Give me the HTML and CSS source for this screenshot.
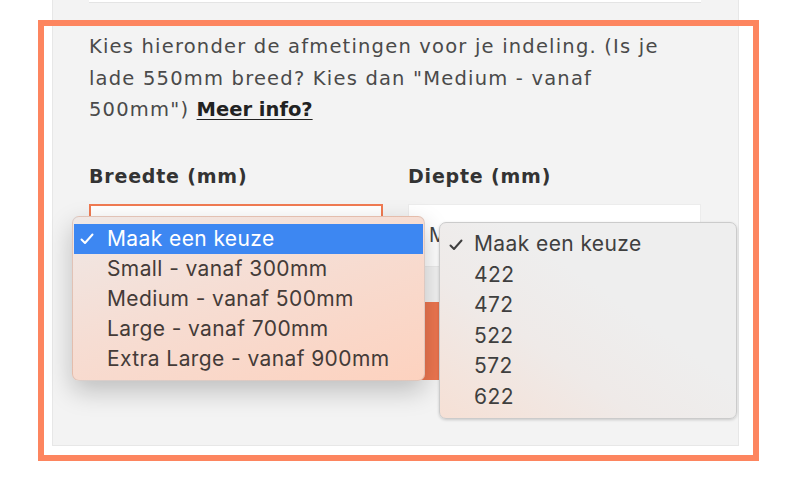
FILE: index.html
```html
<!DOCTYPE html>
<html lang="nl">
  <head>
    <meta charset="UTF-8" />
    <meta name="viewport" content="width=device-width, initial-scale=1.0" />
    <title>Afmetingen</title>
    <link rel="stylesheet" href="styles.css">
  </head>

  <body>
    <div class="page">
      <div class="panel">
        <div class="prev-field"></div>

        <p class="intro">
          Kies hieronder de afmetingen voor je indeling. (Is je
          lade 550mm breed? Kies dan "Medium - vanaf
          500mm") <a href="#" class="more">Meer info?</a>
        </p>

        <div class="fields">
          <div class="field">
            <div class="label">Breedte (mm)</div>
            <div class="select select-focus">Maak een keuze</div>
          </div>
          <div class="field">
            <div class="label">Diepte (mm)</div>
            <div class="select">Maak een keuze</div>
          </div>
        </div>

        <div class="submit"></div>
      </div>

      <!-- open dropdown lijsten -->
      <ul class="menu menu-width">
        <li class="active">
          <svg class="check" width="14" height="12" viewBox="0 0 14 12"><path d="M1.5 6.5 L5 10 L12.5 1.5" /></svg>
          Maak een keuze
        </li>
        <li>Small - vanaf 300mm</li>
        <li>Medium - vanaf 500mm</li>
        <li>Large - vanaf 700mm</li>
        <li>Extra Large - vanaf 900mm</li>
      </ul>

      <ul class="menu menu-depth">
        <li>
          <svg class="check" width="14" height="12" viewBox="0 0 14 12"><path d="M1.5 6.5 L5 10 L12.5 1.5" /></svg>
          Maak een keuze
        </li>
        <li>422</li>
        <li>472</li>
        <li>522</li>
        <li>572</li>
        <li>622</li>
      </ul>

      <div class="highlight"></div>
    </div>
  </body>
</html>
```

FILE: styles.css
```css
body {
  margin: 0;
  background-color: #ffffff;
  font-family: "Open Sans", Arial, sans-serif;
}

.page {
  position: relative;
  width: 800px;
  height: 500px;
  overflow: hidden;
}

.panel {
  box-sizing: border-box;
  width: 687px;
  height: 446px;
  margin-left: 52px;
  padding-left: 36px;
  background-color: #f3f3f3;
  border: 1px solid #e7e7e7;
  border-top: none;
}

.prev-field {
  width: 612px;
  height: 2px;
  background-color: #ffffff;
  border-bottom: 1px solid #e4e4e4;
}

.intro {
  width: 582px;
  margin: 28px 0 0;
  font-family: "DejaVu Sans", sans-serif;
  font-size: 19.5px;
  line-height: 31.5px;
  letter-spacing: 1.2px;
  color: #4a4a4a;
}

.more {
  font-weight: 700;
  color: #222222;
  text-decoration: underline;
  text-underline-offset: 3px;
  letter-spacing: 0;
}

.fields {
  display: grid;
  grid-template-columns: 294px 293px;
  gap: 25px;
  margin-top: 38px;
}

.label {
  font-family: "DejaVu Sans", sans-serif;
  font-weight: 700;
  font-size: 19px;
  line-height: 24px;
  letter-spacing: 0.8px;
  color: #333333;
  margin-bottom: 16px;
}

.select {
  box-sizing: border-box;
  height: 63px;
  padding: 0 20px;
  display: flex;
  align-items: center;
  background-color: #ffffff;
  border: 1px solid #ececec;
  font-family: Inter, Arial, sans-serif;
  font-size: 20px;
  color: #444444;
}

.select-focus {
  border: 2px solid #f07a52;
}

.submit {
  width: 612px;
  height: 78px;
  margin-top: 35px;
  background-color: #ee7650;
}

.menu {
  position: absolute;
  box-sizing: border-box;
  margin: 0;
  padding: 7px 1px;
  list-style: none;
  font-family: Inter, "Liberation Sans", Arial, sans-serif;
  font-size: 21px;
  letter-spacing: 0.4px;
  color: #443b38;
}

.menu li {
  position: relative;
  height: 30px;
  line-height: 30px;
  padding-left: 33px;
}

.menu-width {
  left: 72px;
  top: 216px;
  width: 353px;
  height: 165px;
  border-radius: 7px;
  border: 1px solid rgba(120, 90, 80, 0.18);
  background: linear-gradient(160deg, #efe8e6 0%, #f6ddd3 45%, #fdd2bf 100%);
  box-shadow: 0 10px 26px rgba(0, 0, 0, 0.22);
}

.menu-width .active {
  background-color: #3d87f2;
  color: #ffffff;
}

.menu-depth {
  left: 439px;
  top: 222px;
  width: 298px;
  height: 197px;
  padding-top: 6px;
  border-radius: 7px;
  border: 1px solid #cbcbcb;
  background: linear-gradient(35deg, #f6e0d5 0%, #efeae8 35%, #eeeeee 60%, #eeeeee 100%);
  box-shadow: 0 1px 3px rgba(0, 0, 0, 0.18);
  color: #3f3f3f;
}

.menu-depth li {
  height: 30.5px;
  line-height: 30.5px;
}

.check {
  position: absolute;
  left: 6px;
  top: 9px;
  fill: none;
  stroke: currentColor;
  stroke-width: 2;
  stroke-linecap: round;
  stroke-linejoin: round;
}

.menu-depth .check {
  left: 8px;
  top: 10px;
}

/* annotatie rand om het blok */
.highlight {
  position: absolute;
  left: 38px;
  top: 20px;
  width: 721px;
  height: 441px;
  box-sizing: border-box;
  border: 6px solid #fd855f;
  pointer-events: none;
}
```
